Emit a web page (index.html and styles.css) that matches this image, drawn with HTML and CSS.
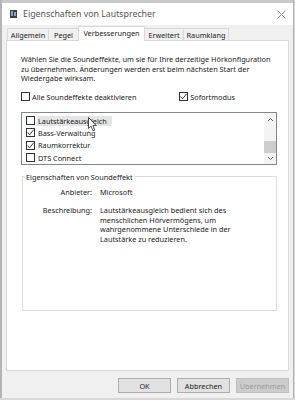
FILE: index.html
```html
<!DOCTYPE html>
<html lang="de">
<head>
<meta charset="utf-8">
<title>Eigenschaften von Lautsprecher</title>
<link rel="stylesheet" href="styles.css">
</head>
<body>
<div class="win">
  <div class="behind"></div>
  <div class="titlebar">
    <svg class="appicon" width="7" height="8" viewBox="0 0 7 8"><rect x="0" y="0" width="7" height="8" fill="#3a3f46"/><rect x="1" y="1" width="2" height="5" fill="#6fa8d8"/><rect x="4" y="2" width="2" height="4" fill="#9aa3ad"/></svg>
    <span class="title">Eigenschaften von Lautsprecher</span>
    <svg class="close" width="9" height="9" viewBox="0 0 9 9"><path d="M0.5 0.5 L8.5 8.5 M8.5 0.5 L0.5 8.5" stroke="#8a8a8a" stroke-width="0.9"/></svg>
  </div>
  <div class="body">
    <div class="tabs">
      <div class="tab t1">Allgemein</div>
      <div class="tab t2">Pegel</div>
      <div class="tab t3 active">Verbesserungen</div>
      <div class="tab t4">Erweitert</div>
      <div class="tab t5">Raumklang</div>
    </div>
    <div class="panel">
      <p class="desc">Wählen Sie die Soundeffekte, um sie für Ihre derzeitige Hörkonfiguration zu übernehmen. Änderungen werden erst beim nächsten Start der Wiedergabe wirksam.</p>
      <div class="opts">
        <label class="chk"><span class="box"></span>Alle Soundeffekte deaktivieren</label>
        <label class="chk sofort"><span class="box on"><svg width="9" height="9" viewBox="0 0 9 9"><path d="M1.5 4.5 L3.6 6.8 L7.6 1.8" fill="none" stroke="#222" stroke-width="0.9"/></svg></span>Sofortmodus</label>
      </div>
      <div class="list">
        <div class="items">
          <div class="item"><span class="box"></span><span class="lbl hover">Lautstärkeausgleich</span></div>
          <div class="item"><span class="box on"><svg width="9" height="9" viewBox="0 0 9 9"><path d="M1.5 4.5 L3.6 6.8 L7.6 1.8" fill="none" stroke="#222" stroke-width="0.9"/></svg></span><span class="lbl">Bass-Verwaltung</span></div>
          <div class="item"><span class="box on"><svg width="9" height="9" viewBox="0 0 9 9"><path d="M1.5 4.5 L3.6 6.8 L7.6 1.8" fill="none" stroke="#222" stroke-width="0.9"/></svg></span><span class="lbl">Raumkorrektur</span></div>
          <div class="item"><span class="box"></span><span class="lbl">DTS Connect</span></div>
        </div>
        <div class="scroll">
          <svg class="arr" width="7" height="5" viewBox="0 0 7 5"><path d="M1 4 L3.5 1.5 L6 4" fill="none" stroke="#606060" stroke-width="1"/></svg>
          <div class="track"><div class="thumb"></div></div>
          <svg class="arr" width="7" height="5" viewBox="0 0 7 5"><path d="M1 1 L3.5 3.5 L6 1" fill="none" stroke="#606060" stroke-width="1"/></svg>
        </div>
        <svg class="cursor" width="10" height="15" viewBox="0 0 10 15"><path d="M0.5 0.5 L0.5 11.5 L3 9.2 L5 13.8 L6.8 13 L4.9 8.6 L8.3 8.6 Z" fill="#fff" stroke="#222" stroke-width="0.8"/></svg>
      </div>
      <fieldset class="group">
        <legend>Eigenschaften von Soundeffekt</legend>
        <div class="props">
          <div class="k">Anbieter:</div>
          <div class="v">Microsoft</div>
          <div class="k kdesc">Beschreibung:</div>
          <div class="v vdesc">Lautstärkeausgleich bedient sich des menschlichen Hörvermögens, um wahrgenommene Unterschiede in der Lautstärke zu reduzieren.</div>
        </div>
      </fieldset>
    </div>
    <div class="buttons">
      <button class="btn">OK</button>
      <button class="btn">Abbrechen</button>
      <button class="btn disabled">Übernehmen</button>
    </div>
  </div>
</div>
</body>
</html>
```
FILE: styles.css
```css
* { box-sizing: border-box; }
html, body { margin: 0; padding: 0; }
body {
  width: 295px; height: 400px; overflow: hidden;
  background: #d8d8d8;
  font-family: "Noto Sans", "Liberation Sans", sans-serif;
  color: #1a1a1a;
  font-size: 7.3px;
}
.win {
  width: 294px; height: 398px;
  background: #f0f0f0;
  border-left: 2px solid #b4b4b4;
  border-right: 1px solid #b0b0b0;
  display: flex; flex-direction: column;
}
.behind { height: 3px; background: #c9c9c9; }
.titlebar {
  height: 22px; background: #fff;
  display: flex; align-items: center;
  padding-left: 8px;
}
.appicon { margin-right: 6px; }
.title { font-size: 8.8px; color: #555; flex: 1; }
.close { margin-right: 7px; }
.body { flex: 1; display: flex; flex-direction: column; padding: 1px 4px 0 4px; }
.tabs { height: 15px; display: flex; align-items: flex-end; padding-left: 1px; position: relative; z-index: 1; }
.tab {
  height: 12px; margin-bottom: 1px;
  border: 1px solid #d9d9d9; border-bottom: none; border-right: none;
  background: #f0f0f0;
  display: flex; align-items: center; justify-content: center;
  font-size: 7.3px; color: #222;
}
.t1 { width: 41px; }
.t2 { width: 30px; }
.t3 { width: 67px; }
.t4 { width: 38px; }
.t5 { width: 46px; border-right: 1px solid #d9d9d9; }
.tab.active {
  height: 15px; margin-bottom: 0;
  background: #fff; border-right: 1px solid #d9d9d9;
  align-items: flex-start; padding-top: 1px;
}
.tab.active + .tab { border-left: none; }
.panel {
  height: 331px; margin-top: -1px;
  background: #fff; border: 1px solid #d9d9d9;
  padding: 14px 11px 0 14px;
}
.desc { margin: 0; line-height: 9.5px; width: 252px; }
.opts { display: flex; margin-top: 8px; height: 10px; align-items: center; }
.chk { display: flex; align-items: center; gap: 2px; }
.sofort { margin-left: auto; margin-right: 42px; }
.box {
  width: 9px; height: 9px; border: 1px solid #333; background: #fff;
  display: inline-flex; align-items: center; justify-content: center; flex: none;
}
.box svg { display: block; margin: -1px; }
.list {
  margin-top: 10px; height: 53px;
  border: 1px solid #828790;
  display: flex; position: relative;
}
.items { flex: 1; padding: 2px 0 0 4px; }
.item { height: 12.3px; display: flex; align-items: center; gap: 2px; }
.lbl { padding: 0 1px; line-height: 10px; }
.lbl.hover { background: #e5e5e5; width: 75px; }
.scroll { width: 12px; background: #f4f4f4; display: flex; flex-direction: column; align-items: center; padding: 4px 0 3px; }
.track { flex: 1; width: 100%; position: relative; }
.thumb { position: absolute; left: 0; right: 0; top: 19px; height: 12px; background: #cdcdcd; }
.arr { flex: none; }
.cursor { position: absolute; left: 66px; top: 4px; }
.group {
  margin: 7px 0 0 1px; padding: 6px 0 0 0;
  border: 1px solid #dcdcdc;
  height: 139px;
  min-width: 0;
}
.group legend { padding: 0 1px; margin-left: 2px; line-height: 10px; color: #222; }
.props { display: grid; grid-template-columns: 69px 142px; column-gap: 8px; row-gap: 9px; }
.k { text-align: right; line-height: 9.5px; color: #222; }
.v { line-height: 9.5px; }
.buttons { display: flex; justify-content: flex-end; gap: 6px; margin-top: 7px; padding-right: 0; }
.btn {
  width: 53px; height: 15px; margin: 0; padding: 0;
  background: #e1e1e1; border: 1px solid #adadad;
  font-family: inherit; font-size: 7.3px; color: #222;
}
.btn.disabled { background: #cccccc; border-color: #bfbfbf; color: #9c9c9c; }
```
